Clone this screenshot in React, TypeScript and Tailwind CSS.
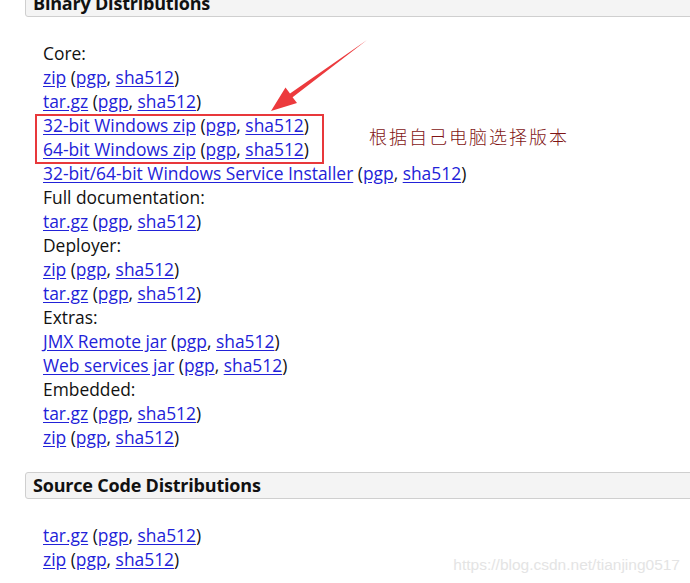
import React from 'react';

type Row = { label?: string; link?: string };

const binary: Row[] = [
  { label: 'Core:' },
  { link: 'zip' },
  { link: 'tar.gz' },
  { link: '32-bit Windows zip' },
  { link: '64-bit Windows zip' },
  { link: '32-bit/64-bit Windows Service Installer' },
  { label: 'Full documentation:' },
  { link: 'tar.gz' },
  { label: 'Deployer:' },
  { link: 'zip' },
  { link: 'tar.gz' },
  { label: 'Extras:' },
  { link: 'JMX Remote jar' },
  { link: 'Web services jar' },
  { label: 'Embedded:' },
  { link: 'tar.gz' },
  { link: 'zip' },
];

const source: Row[] = [{ link: 'tar.gz' }, { link: 'zip' }];

function A({ children }: { children: React.ReactNode }) {
  return <a href="#" className="text-[#2222d8] underline underline-offset-2">{children}</a>;
}

function Lines({ rows }: { rows: Row[] }) {
  return (
    <ul className="pl-[43px] text-[17.4px]">
      {rows.map((r, i) =>
        r.label ? (
          <li key={i} className="h-6 leading-6">{r.label}</li>
        ) : (
          <li key={i} className="h-6 leading-6">
            <A>{r.link}</A> (<A>pgp</A>, <A>sha512</A>)
          </li>
        )
      )}
    </ul>
  );
}

function Header({ title, className }: { title: string; className?: string }) {
  return (
    <h3
      className={`ml-[25px] h-[27px] rounded-[3px] border border-[#cfcfcf] bg-[#f4f4f4] pl-[7px] text-[18px] font-bold leading-[25px] tracking-[-0.2px] ${className ?? ''}`}
    >
      {title}
    </h3>
  );
}

export default function App() {
  return (
    <div
      className="relative h-[583px] w-[690px] overflow-hidden bg-white text-[16px] leading-6 text-[#111]"
      style={{ fontFamily: '"Open Sans", "Noto Sans", sans-serif' }}
    >
      <Header title="Binary Distributions" className="-mt-[10px] -mr-2" />
      <div className="mt-6">
        <Lines rows={binary} />
      </div>
      <Header title="Source Code Distributions" className="mt-[23px] -mr-2" />
      <div className="mt-6">
        <Lines rows={source} />
      </div>

      <div className="absolute left-[35px] top-[114px] h-[50px] w-[289px] border-2 border-[#e8383b]" />

      <svg className="absolute left-0 top-0" width="690" height="583">
        <polygon
          points="271,111 285.5,87.5 290,93.5 367,40 292.6,97.2 297,103"
          fill="#ec3a3d"
        />
      </svg>

      <div
        className="absolute left-[369px] top-[124px] text-[18px] leading-6 tracking-[2px] text-[#7f1414]"
        style={{ fontFamily: '"Noto Sans CJK SC", sans-serif', fontWeight: 300 }}
      >
        根据自己电脑选择版本
      </div>

      <div
        className="absolute right-[10px] top-[555px] text-[15.5px] leading-5 text-[#e4e4e4]"
        style={{ fontFamily: '"Liberation Sans", Arial, sans-serif' }}
      >
        https://blog.csdn.net/tianjing0517
      </div>
    </div>
  );
}
